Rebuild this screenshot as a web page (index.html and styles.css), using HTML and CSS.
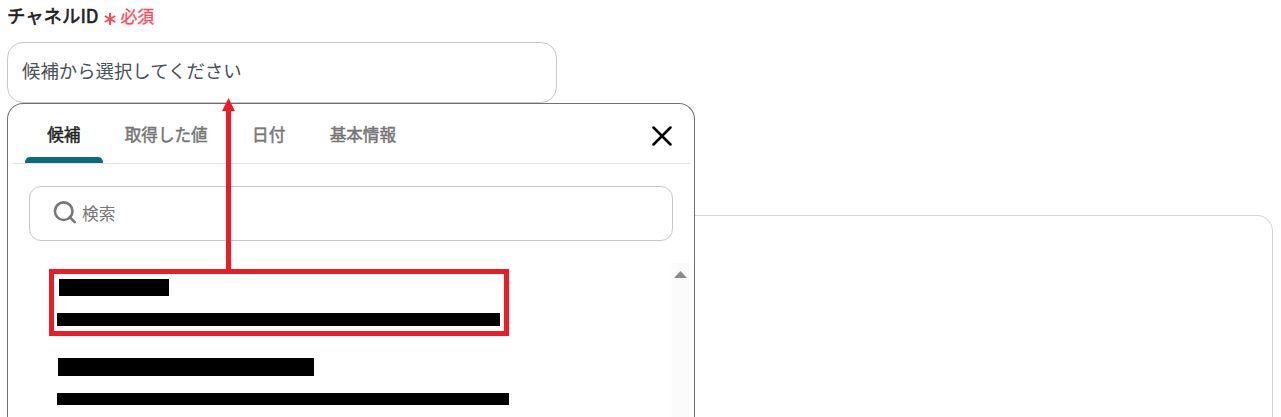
FILE: index.html
```
<!DOCTYPE html>
<html lang="ja">
<head>
<meta charset="UTF-8"/>
<title>チャネルID</title>
<link rel="stylesheet" href="styles.css">
<meta name="viewport" content="width=device-width, initial-scale=1"/>
</head>
<body>
<div class="field">
	<div class="label">
		<span class="labelText">チャネルID</span>
		<svg class="asterisk" width="14" height="14" viewBox="0 0 14 14"><path d="M7 1v12M1.8 4l10.4 6M12.2 4L1.8 10"/></svg>
		<span class="required">必須</span>
	</div>
	<div class="select">候補から選択してください</div>
	<div class="dropdown">
		<div class="tabs">
			<div class="tab active">候補</div>
			<div class="tab">取得した値</div>
			<div class="tab">日付</div>
			<div class="tab">基本情報</div>
			<svg class="close" width="20" height="20" viewBox="0 0 20 20"><path d="M1.5 1.5l17 17M18.5 1.5l-17 17"/></svg>
		</div>
		<div class="search">
			<svg class="searchIcon" width="24" height="24" viewBox="0 0 24 24"><circle cx="10.7" cy="10.2" r="8.8"/><path d="M16.7 16.2l5 5"/></svg>
			<span>検索</span>
		</div>
		<div class="list">
			<ul class="options">
				<li class="option marked"><span class="name short"></span><span class="detail"></span></li>
				<li class="option"><span class="name"></span><span class="detail wide"></span></li>
			</ul>
			<div class="scrollbar"><svg width="13" height="7" viewBox="0 0 13 7"><path d="M6.5 0L13 7H0z"/></svg></div>
		</div>
	</div>
	<svg class="arrow" width="13" height="172" viewBox="0 0 13 172"><path d="M6.5 0L13 13H9v159H4V13H0z"/></svg>
</div>
<div class="panel"></div>
</body>
</html>
```
FILE: styles.css
```
* { box-sizing: border-box; }
body {
	margin: 0;
	background: #fff;
	font-family: "Noto Sans CJK JP", sans-serif;
	font-size: 16px;
}
svg { display: block; flex: none; }

.field { position: relative; height: 215px; padding-left: 7px; }
.label { display: flex; align-items: center; height: 42px; padding-bottom: 12px; color: #222; }
.labelText { font-size: 18.4px; -webkit-text-stroke: 0.6px #222; }
.asterisk { margin: 8px 3px 0 5px; fill: none; stroke: #ff4757; stroke-width: 2; }
.required { padding-top: 1px; color: #ff4757; font-size: 16.8px; -webkit-text-stroke: 0.3px #ff4757; }
.select {
	display: flex;
	align-items: center;
	width: 550px;
	height: 61px;
	padding: 0 14px 6px;
	border: 1px solid #c8c8c8;
	border-radius: 16px;
	color: #495057;
	font-size: 18.4px;
}

.dropdown {
	position: absolute;
	left: 7px;
	top: 103px;
	width: 688px;
	height: 314px;
	padding: 0 4px 0 5px;
	border: 1px solid #707070;
	border-bottom: 0;
	border-radius: 16px 16px 0 0;
	background: #fff;
}
.tabs {
	display: flex;
	height: 60px;
	padding-left: 12px;
	border-bottom: 1px solid #e0e0e0;
}
.tab {
	height: 59px;
	padding: 0 22.2px;
	color: #767676;
	font-size: 16.6px;
	line-height: 60px;
	-webkit-text-stroke: 0.5px #767676;
}
.tab.active { position: relative; color: #222; -webkit-text-stroke-color: #222; }
.tab.active::after {
	content: '';
	position: absolute;
	left: 0;
	right: 0;
	bottom: 0;
	height: 6px;
	border-radius: 5px 5px 0 0;
	background: #086b80;
}
.close { margin: 22px 18px 0 auto; fill: none; stroke: #000; stroke-width: 2.5; stroke-linecap: round; }

.search {
	display: flex;
	align-items: center;
	height: 55px;
	margin: 22px 17px 0 16px;
	padding: 0 0 2px 23px;
	border: 1px solid #c8c8c8;
	border-radius: 12px;
	color: #767676;
	font-size: 16.7px;
}
.searchIcon { margin-right: 5px; fill: none; stroke: #767676; stroke-width: 2.6; stroke-linecap: round; }

.list { display: flex; justify-content: space-between; height: 154px; margin-top: 22px; }
.options { margin: 6px 0 0 36px; padding: 0; list-style: none; }
.option { width: 460px; height: 67px; padding: 17px 8px 0; }
.option + .option { margin-top: 5px; }
.option.marked { padding: 5px; border: 5px solid #ed1c24; }
.name, .detail { display: block; background: #000; }
.name { width: 256px; height: 18px; margin-left: 1px; }
.name.short { width: 110px; height: 17px; margin-left: 0; }
.detail { width: 443px; height: 13px; margin-top: 17px; }
.marked .detail { margin-left: -2px; }
.detail.wide { width: 452px; height: 12px; }
.scrollbar { width: 19px; padding: 8px 3px; background: #fbfbfb; }
.scrollbar path { fill: #8a8a8a; }

.arrow { position: absolute; left: 222px; top: 98px; fill: #ed1c24; }

.panel {
	height: 202px;
	margin: 0 8px 0 7px;
	border: 1px solid #ced4da;
	border-bottom: 0;
	border-radius: 16px 16px 0 0;
}
```
